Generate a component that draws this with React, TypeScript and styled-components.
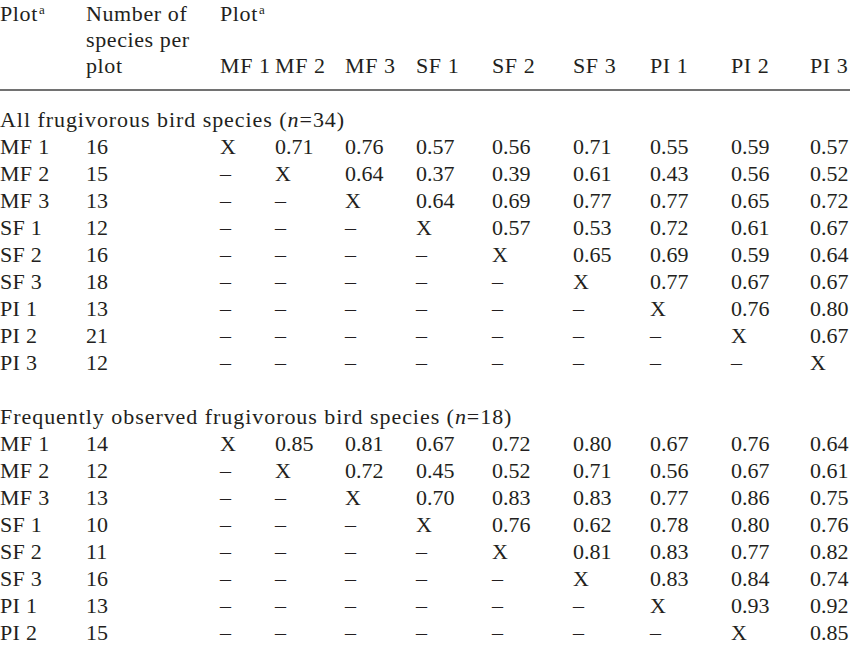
import React from "react";
import styled, { createGlobalStyle } from "styled-components";

const GlobalStyle = createGlobalStyle`
  html, body {
    margin: 0;
    padding: 0;
    background: #ffffff;
  }
  body {
    font-family: "Liberation Serif", "Times New Roman", serif;
    color: #231f20;
    -webkit-font-smoothing: antialiased;
  }
`;

const COLS = "86px 134px 55px 70px 71px 76px 81px 77px 81px 79px 40px";

const Page = styled.div`
  width: 850px;
  height: 647px;
  overflow: hidden;
  padding-top: 1px;
  box-sizing: border-box;
`;

const HeaderGrid = styled.div`
  display: grid;
  grid-template-columns: ${COLS};
  grid-template-rows: repeat(3, 26px);
  font-size: 22px;
  line-height: 26px;
`;

const HeadCell = styled.div<{ $col: string; $row: string }>`
  grid-column: ${(p) => p.$col};
  grid-row: ${(p) => p.$row};
  white-space: nowrap;
  letter-spacing: 0.6px;
`;

const Sup = styled.sup`
  font-size: 13px;
  line-height: 0;
  vertical-align: 0;
  position: relative;
  top: -7px;
  margin-left: 1px;
`;

const Rule = styled.div`
  height: 2px;
  background: #727272;
  margin-top: 10px;
  margin-bottom: 15px;
`;

const BodyGrid = styled.div`
  display: grid;
  grid-template-columns: ${COLS};
  grid-auto-rows: 27px;
  font-size: 22px;
  line-height: 27px;
`;

const SectionTitle = styled.div`
  grid-column: 1 / -1;
  white-space: nowrap;
  letter-spacing: 0.95px;
`;

const Spacer = styled.div`
  grid-column: 1 / -1;
`;

const Cell = styled.div<{ $label?: boolean }>`
  white-space: nowrap;
  letter-spacing: ${(p) => (p.$label ? "0.3px" : "0")};
`;

const plots = ["MF 1", "MF 2", "MF 3", "SF 1", "SF 2", "SF 3", "PI 1", "PI 2", "PI 3"];

type Section = {
  title: string;
  n: number;
  rows: { count: number; values: string[] }[];
};

const sections: Section[] = [
  {
    title: "All frugivorous bird species",
    n: 34,
    rows: [
      { count: 16, values: ["0.71", "0.76", "0.57", "0.56", "0.71", "0.55", "0.59", "0.57"] },
      { count: 15, values: ["0.64", "0.37", "0.39", "0.61", "0.43", "0.56", "0.52"] },
      { count: 13, values: ["0.64", "0.69", "0.77", "0.77", "0.65", "0.72"] },
      { count: 12, values: ["0.57", "0.53", "0.72", "0.61", "0.67"] },
      { count: 16, values: ["0.65", "0.69", "0.59", "0.64"] },
      { count: 18, values: ["0.77", "0.67", "0.67"] },
      { count: 13, values: ["0.76", "0.80"] },
      { count: 21, values: ["0.67"] },
      { count: 12, values: [] },
    ],
  },
  {
    title: "Frequently observed frugivorous bird species",
    n: 18,
    rows: [
      { count: 14, values: ["0.85", "0.81", "0.67", "0.72", "0.80", "0.67", "0.76", "0.64"] },
      { count: 12, values: ["0.72", "0.45", "0.52", "0.71", "0.56", "0.67", "0.61"] },
      { count: 13, values: ["0.70", "0.83", "0.83", "0.77", "0.86", "0.75"] },
      { count: 10, values: ["0.76", "0.62", "0.78", "0.80", "0.76"] },
      { count: 11, values: ["0.81", "0.83", "0.77", "0.82"] },
      { count: 16, values: ["0.83", "0.84", "0.74"] },
      { count: 13, values: ["0.93", "0.92"] },
      { count: 15, values: ["0.85"] },
    ],
  },
];

function rowCells(index: number, values: string[]): string[] {
  const cells: string[] = [];
  for (let i = 0; i < index; i++) cells.push("\u2013");
  cells.push("X");
  return cells.concat(values);
}

export default function App() {
  return (
    <>
      <GlobalStyle />
      <Page>
        <HeaderGrid>
          <HeadCell $col="1" $row="1">
            Plot<Sup>a</Sup>
          </HeadCell>
          <HeadCell $col="2" $row="1">Number of</HeadCell>
          <HeadCell $col="2" $row="2">species per</HeadCell>
          <HeadCell $col="2" $row="3">plot</HeadCell>
          <HeadCell $col="3 / span 9" $row="1">
            Plot<Sup>a</Sup>
          </HeadCell>
          {plots.map((p, i) => (
            <HeadCell key={p} $col={String(i + 3)} $row="3">
              {p}
            </HeadCell>
          ))}
        </HeaderGrid>
        <Rule />
        <BodyGrid>
          {sections.map((s, si) => (
            <React.Fragment key={s.title}>
              {si > 0 && <Spacer />}
              <SectionTitle>
                {s.title} (<i>n</i>={s.n})
              </SectionTitle>
              {s.rows.map((r, ri) => (
                <React.Fragment key={ri}>
                  <Cell $label>{plots[ri]}</Cell>
                  <Cell>{r.count}</Cell>
                  {rowCells(ri, r.values).map((v, ci) => (
                    <Cell key={ci}>{v}</Cell>
                  ))}
                </React.Fragment>
              ))}
            </React.Fragment>
          ))}
        </BodyGrid>
      </Page>
    </>
  );
}
